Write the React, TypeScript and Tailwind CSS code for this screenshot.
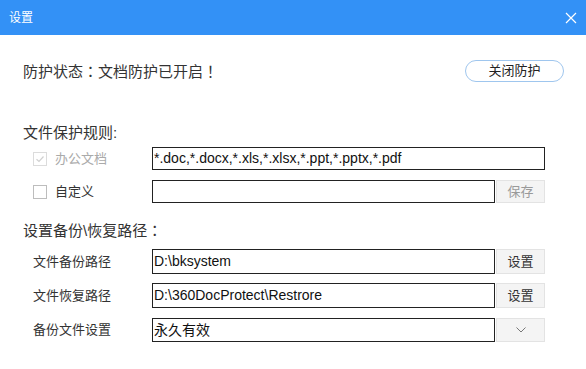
import React from "react";

function Checkbox({ checked, disabled }: { checked?: boolean; disabled?: boolean }) {
  return (
    <div
      className={`w-[14px] h-[14px] border flex items-center justify-center bg-white ${
        disabled ? "border-[#dcdcdc]" : "border-[#bdbdbd]"
      }`}
    >
      {checked && (
        <svg width="10" height="10" viewBox="0 0 10 10">
          <path d="M1.5 5.2 L4 7.5 L8.5 2.5" fill="none" stroke="#d0d0d0" strokeWidth="1.2" />
        </svg>
      )}
    </div>
  );
}

function Btn({ children, muted }: { children: React.ReactNode; muted?: boolean }) {
  return (
    <div
      className={`ml-[1px] w-[49px] h-full flex items-center justify-center bg-[#f4f4f4] border border-[#e3e3e3] text-[13px] ${
        muted ? "text-[#9a9a9a]" : "text-[#333]"
      }`}
    >
      {children}
    </div>
  );
}

function P({ children }: { children: React.ReactNode }) {
  return <span className="font-['Noto_Sans_CJK_TC',sans-serif]">{children}</span>;
}

export default function App() {
  return (
    <div className="w-[586px] h-[369px] bg-white font-['Liberation_Sans','Noto_Sans_CJK_SC',sans-serif] text-[#333] overflow-hidden">
      <div className="h-[35px] bg-[#3391f6] flex items-center justify-between pl-[9px] pr-[9px]">
        <span className="text-white text-[12px] leading-none">设置</span>
        <svg width="12" height="12" viewBox="0 0 12 12">
          <path d="M1 1 L11 11 M11 1 L1 11" stroke="#ffffff" strokeWidth="1.2" fill="none" />
        </svg>
      </div>

      <div className="mt-[25px] h-[22px] flex items-center justify-between pl-[23px] pr-[22px]">
        <span className="text-[15px] leading-[20px] text-[#333]">
          防护状态<P>：</P>文档防护已开启<P>！</P>
        </span>
        <div className="w-[99px] h-[22px] rounded-full border border-[#9fc6ee] flex items-center justify-center text-[13px] text-[#222]">
          关闭防护
        </div>
      </div>

      <div className="mt-[41px] pl-[23px] text-[15px] leading-[20px]">文件保护规则:</div>

      <div className="mt-[4px] h-[23px] flex items-center pl-[33px] pr-[41px]">
        <Checkbox checked disabled />
        <span className="ml-[8px] w-[97px] text-[13px] text-[#aaa]">办公文档</span>
        <div className="flex-1 h-full border border-[#222] flex items-center pl-[1px] text-[14px] text-[#111]">
          *.doc,*.docx,*.xls,*.xlsx,*.ppt,*.pptx,*.pdf
        </div>
      </div>

      <div className="mt-[10px] h-[23px] flex items-center pl-[33px] pr-[41px]">
        <Checkbox />
        <span className="ml-[8px] w-[97px] text-[13px] text-[#333]">自定义</span>
        <div className="flex-1 h-full border border-[#222]" />
        <Btn muted>保存</Btn>
      </div>

      <div className="mt-[17px] pl-[23px] text-[15px] leading-[20px]">
        设置备份\恢复路径<P>：</P>
      </div>

      {[
        { label: "文件备份路径", value: "D:\\bksystem", btn: "设置" },
        { label: "文件恢复路径", value: "D:\\360DocProtect\\Restrore", btn: "设置" },
      ].map((r, i) => (
        <div
          key={i}
          className={`${i === 0 ? "mt-[8px]" : "mt-[9px]"} h-[25px] flex items-center pl-[33px] pr-[41px]`}
        >
          <span className="w-[119px] text-[13px] text-[#333]">{r.label}</span>
          <div className="flex-1 h-full border border-[#222] flex items-center pl-[1px] text-[14px] text-[#111]">
            {r.value}
          </div>
          <Btn>{r.btn}</Btn>
        </div>
      ))}

      <div className="mt-[10px] h-[24px] flex items-center pl-[33px] pr-[41px]">
        <span className="w-[119px] text-[13px] text-[#333]">备份文件设置</span>
        <div className="flex-1 h-full border border-[#222] flex items-center pl-[1px] text-[14px] text-[#111]">
          永久有效
        </div>
        <div className="ml-[1px] w-[49px] h-full flex items-center justify-center bg-[#f4f4f4] border border-[#e3e3e3]">
          <svg width="10" height="6" viewBox="0 0 10 6">
            <path d="M0.5 0.5 L5 5 L9.5 0.5" stroke="#777" strokeWidth="1" fill="none" />
          </svg>
        </div>
      </div>
    </div>
  );
}
